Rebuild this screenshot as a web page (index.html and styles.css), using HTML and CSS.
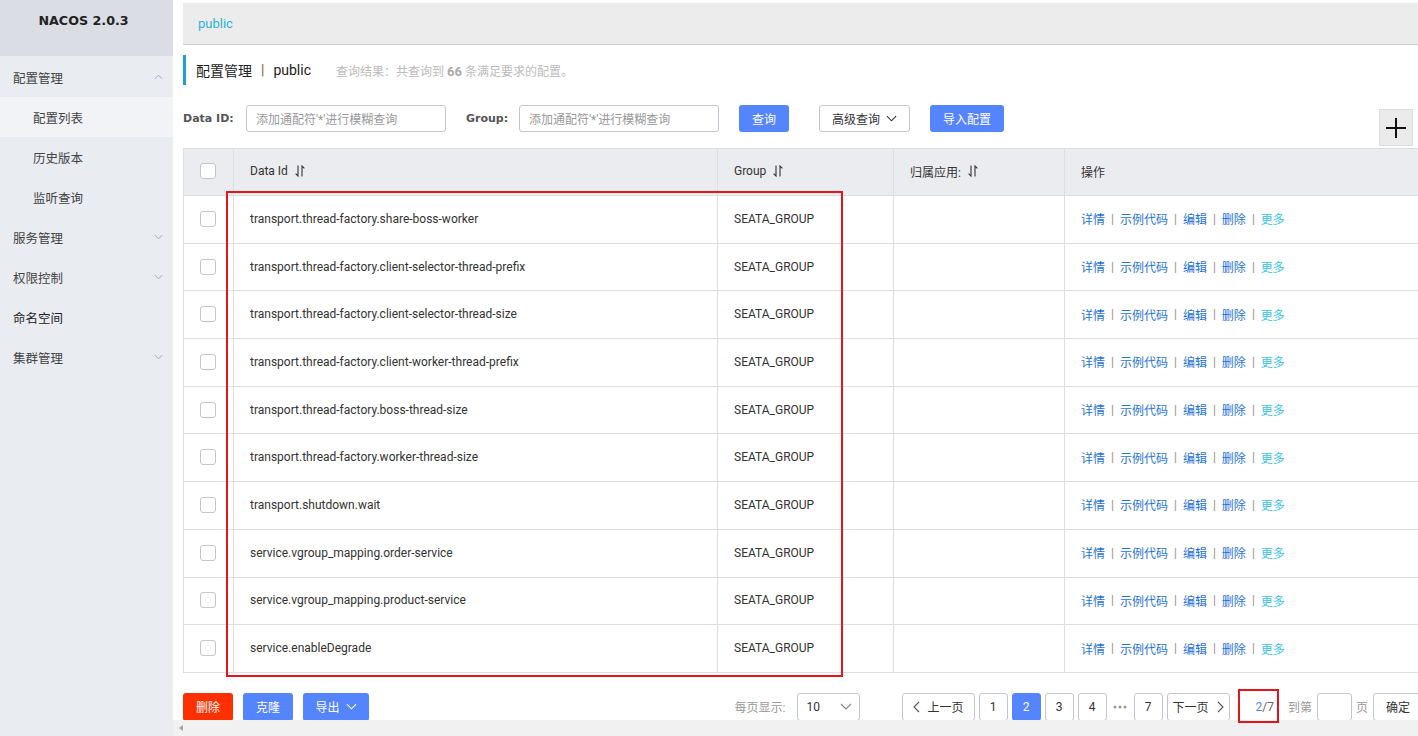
FILE: index.html
```html
<!DOCTYPE html>
<html lang="zh-CN">
<head>
<meta charset="utf-8">
<title>NACOS</title>
<link rel="stylesheet" href="styles.css">
</head>
<body>
<div class="app">
  <aside class="sidebar">
    <div class="brand">NACOS 2.0.3</div>
    <nav class="menu">
      <div class="menu-item">配置管理<svg class="arrow" viewBox="0 0 10 6"><polyline points="1,5 5,1 9,5"/></svg></div>
      <div class="menu-sub active">配置列表</div>
      <div class="menu-sub">历史版本</div>
      <div class="menu-sub">监听查询</div>
      <div class="menu-item">服务管理<svg class="arrow" viewBox="0 0 10 6"><polyline points="1,1 5,5 9,1"/></svg></div>
      <div class="menu-item">权限控制<svg class="arrow" viewBox="0 0 10 6"><polyline points="1,1 5,5 9,1"/></svg></div>
      <div class="menu-item dark">命名空间</div>
      <div class="menu-item">集群管理<svg class="arrow" viewBox="0 0 10 6"><polyline points="1,1 5,5 9,1"/></svg></div>
    </nav>
  </aside>
  <main class="main">
    <div class="content">
      <div class="crumb"><span class="crumb-link">public</span></div>
      <div class="title-row">
        <span class="title">配置管理</span><span class="title-sep">|</span><span class="title">public</span>
        <span class="result">查询结果：共查询到 <b>66</b> 条满足要求的配置。</span>
      </div>
      <div class="search-row">
        <label class="label">Data ID:</label>
        <div class="input"><span class="ph">添加通配符'*'进行模糊查询</span></div>
        <label class="label label-group">Group:</label>
        <div class="input"><span class="ph">添加通配符'*'进行模糊查询</span></div>
        <button class="btn btn-primary btn-query">查询</button>
        <button class="btn btn-normal btn-adv">高级查询<svg class="chev" viewBox="0 0 12 7"><polyline points="1,1 6,6 11,1"/></svg></button>
        <button class="btn btn-primary btn-import">导入配置</button>
        <button class="btn-plus"><svg viewBox="0 0 22 22"><line x1="1" y1="11" x2="21" y2="11"/><line x1="11" y1="1" x2="11" y2="21"/></svg></button>
      </div>
      <div class="table">
        <div class="tr thead">
          <div class="td c-check"><span class="checkbox"></span></div>
          <div class="td c-id">Data Id<svg class="sort" viewBox="0 0 10 12"><path d="M3 0.5V11L0.6 8.6M7 11.5V1L9.4 3.4"/></svg></div>
          <div class="td c-group">Group<svg class="sort" viewBox="0 0 10 12"><path d="M3 0.5V11L0.6 8.6M7 11.5V1L9.4 3.4"/></svg></div>
          <div class="td c-app">归属应用:<svg class="sort" viewBox="0 0 10 12"><path d="M3 0.5V11L0.6 8.6M7 11.5V1L9.4 3.4"/></svg></div>
          <div class="td c-op">操作</div>
        </div>
        <div class="tr"><div class="td c-check"><span class="checkbox"></span></div><div class="td c-id">transport.thread-factory.share-boss-worker</div><div class="td c-group">SEATA_GROUP</div><div class="td c-app"></div><div class="td c-op"><a>详情</a><i>|</i><a>示例代码</a><i>|</i><a>编辑</a><i>|</i><a>删除</a><i>|</i><a class="more">更多</a></div></div>
        <div class="tr"><div class="td c-check"><span class="checkbox"></span></div><div class="td c-id">transport.thread-factory.client-selector-thread-prefix</div><div class="td c-group">SEATA_GROUP</div><div class="td c-app"></div><div class="td c-op"><a>详情</a><i>|</i><a>示例代码</a><i>|</i><a>编辑</a><i>|</i><a>删除</a><i>|</i><a class="more">更多</a></div></div>
        <div class="tr"><div class="td c-check"><span class="checkbox"></span></div><div class="td c-id">transport.thread-factory.client-selector-thread-size</div><div class="td c-group">SEATA_GROUP</div><div class="td c-app"></div><div class="td c-op"><a>详情</a><i>|</i><a>示例代码</a><i>|</i><a>编辑</a><i>|</i><a>删除</a><i>|</i><a class="more">更多</a></div></div>
        <div class="tr"><div class="td c-check"><span class="checkbox"></span></div><div class="td c-id">transport.thread-factory.client-worker-thread-prefix</div><div class="td c-group">SEATA_GROUP</div><div class="td c-app"></div><div class="td c-op"><a>详情</a><i>|</i><a>示例代码</a><i>|</i><a>编辑</a><i>|</i><a>删除</a><i>|</i><a class="more">更多</a></div></div>
        <div class="tr"><div class="td c-check"><span class="checkbox"></span></div><div class="td c-id">transport.thread-factory.boss-thread-size</div><div class="td c-group">SEATA_GROUP</div><div class="td c-app"></div><div class="td c-op"><a>详情</a><i>|</i><a>示例代码</a><i>|</i><a>编辑</a><i>|</i><a>删除</a><i>|</i><a class="more">更多</a></div></div>
        <div class="tr"><div class="td c-check"><span class="checkbox"></span></div><div class="td c-id">transport.thread-factory.worker-thread-size</div><div class="td c-group">SEATA_GROUP</div><div class="td c-app"></div><div class="td c-op"><a>详情</a><i>|</i><a>示例代码</a><i>|</i><a>编辑</a><i>|</i><a>删除</a><i>|</i><a class="more">更多</a></div></div>
        <div class="tr"><div class="td c-check"><span class="checkbox"></span></div><div class="td c-id">transport.shutdown.wait</div><div class="td c-group">SEATA_GROUP</div><div class="td c-app"></div><div class="td c-op"><a>详情</a><i>|</i><a>示例代码</a><i>|</i><a>编辑</a><i>|</i><a>删除</a><i>|</i><a class="more">更多</a></div></div>
        <div class="tr"><div class="td c-check"><span class="checkbox"></span></div><div class="td c-id">service.vgroup_mapping.order-service</div><div class="td c-group">SEATA_GROUP</div><div class="td c-app"></div><div class="td c-op"><a>详情</a><i>|</i><a>示例代码</a><i>|</i><a>编辑</a><i>|</i><a>删除</a><i>|</i><a class="more">更多</a></div></div>
        <div class="tr"><div class="td c-check"><span class="checkbox"></span></div><div class="td c-id">service.vgroup_mapping.product-service</div><div class="td c-group">SEATA_GROUP</div><div class="td c-app"></div><div class="td c-op"><a>详情</a><i>|</i><a>示例代码</a><i>|</i><a>编辑</a><i>|</i><a>删除</a><i>|</i><a class="more">更多</a></div></div>
        <div class="tr"><div class="td c-check"><span class="checkbox"></span></div><div class="td c-id">service.enableDegrade</div><div class="td c-group">SEATA_GROUP</div><div class="td c-app"></div><div class="td c-op"><a>详情</a><i>|</i><a>示例代码</a><i>|</i><a>编辑</a><i>|</i><a>删除</a><i>|</i><a class="more">更多</a></div></div>
      </div>
      <div class="toolbar">
        <div class="actions">
          <button class="btn btn-danger">删除</button>
          <button class="btn btn-primary">克隆</button>
          <button class="btn btn-primary btn-export">导出<svg class="chev" viewBox="0 0 12 7"><polyline points="1,1 6,6 11,1"/></svg></button>
        </div>
        <div class="pager">
          <span class="pg-label">每页显示:</span>
          <div class="pg-select">10<svg class="chev" viewBox="0 0 12 7"><polyline points="1,1 6,6 11,1"/></svg></div>
          <div class="pg-btn pg-prev"><svg class="chev-l" viewBox="0 0 7 12"><polyline points="6,1 1,6 6,11"/></svg>上一页</div>
          <div class="pg-btn pg-num">1</div>
          <div class="pg-btn pg-num current">2</div>
          <div class="pg-btn pg-num">3</div>
          <div class="pg-btn pg-num">4</div>
          <svg class="pg-ellipsis" viewBox="0 0 14 4"><circle cx="2" cy="2" r="1.5"/><circle cx="7" cy="2" r="1.5"/><circle cx="12" cy="2" r="1.5"/></svg>
          <div class="pg-btn pg-num pg-last">7</div>
          <div class="pg-btn pg-next">下一页<svg class="chev-l" viewBox="0 0 7 12"><polyline points="1,1 6,6 1,11"/></svg></div>
          <span class="pg-display"><em>2</em>/7</span>
          <span class="pg-label pg-jump">到第</span>
          <div class="pg-input"></div>
          <span class="pg-label pg-page">页</span>
          <div class="pg-btn pg-go">确定</div>
        </div>
      </div>
    </div>
    <div class="hscroll"><span class="hs-arrow"></span></div>
  </main>
  <div class="mark mark-table"></div>
  <div class="mark mark-page"></div>
</div>
</body>
</html>
```

FILE: styles.css
```css
* { box-sizing: border-box; }
html, body { margin: 0; padding: 0; }
body {
  width: 1418px;
  height: 736px;
  overflow: hidden;
  background: #fff;
  font-family: Roboto, "Noto Sans CJK SC", sans-serif;
  color: #333;
  font-size: 12px;
}
.app {
  position: relative;
  display: flex;
  width: 1418px;
  height: 736px;
}

/* sidebar */
.sidebar {
  width: 173px;
  flex: none;
  background: #e9ecf1;
  height: 736px;
}
.brand {
  height: 56px;
  background: #dadde3;
  text-align: center;
  font-family: "DejaVu Sans", "Noto Sans", sans-serif;
  font-weight: bold;
  font-size: 12.7px;
  color: #222;
  padding-top: 13px;
  padding-right: 6px;
}
.menu { padding-top: 1px; }
.menu-item, .menu-sub {
  height: 40px;
  display: flex;
  align-items: center;
  font-family: "Noto Sans CJK SC", sans-serif;
  font-size: 12.5px;
  color: #444;
  position: relative;
}
.menu-item { padding-left: 13px; }
.menu-item.dark { color: #222; }
.menu-sub { padding-left: 33px; }
.menu-sub.active { background: #f2f3f7; }
.arrow {
  position: absolute;
  left: 154px;
  top: 17px;
  width: 9px;
  height: 6px;
  fill: none;
  stroke: #9aa0a8;
  stroke-width: 1;
}

/* main */
.main {
  flex: 1;
  display: flex;
  flex-direction: column;
  height: 736px;
  overflow: hidden;
  min-width: 0;
}
.content {
  flex: 1;
  padding: 3px 0 0 10px;
  overflow: hidden;
  min-height: 0;
}
.hscroll {
  height: 16px;
  flex: none;
  background: #f1f1f1;
  position: relative;
}
.hs-arrow {
  position: absolute;
  left: 6px;
  top: 5px;
  width: 0;
  height: 0;
  border-top: 3.5px solid transparent;
  border-bottom: 3.5px solid transparent;
  border-right: 4px solid #a3a3a3;
}

.crumb {
  height: 42px;
  background: #ececec;
  border-bottom: 1px solid #cfcfcf;
  padding-left: 15px;
  display: flex;
  align-items: center;
  width: 1235px;
}
.crumb-link { color: #2bb2d6; font-size: 13px; }

.title-row {
  margin-top: 10px;
  height: 30px;
  border-left: 3px solid #1e9fd6;
  display: flex;
  align-items: center;
  padding-left: 10px;
}
.title { font-size: 14px; color: #222; }
.title-sep { font-size: 14px; color: #8a5a2a; margin: 0 9px; }
.result { margin-left: 25px; color: #bbb; font-size: 12px; }
.result b { color: #aaa; font-size: 13px; }

.search-row {
  margin-top: 20px;
  display: flex;
  align-items: flex-start;
  width: 1230px;
}
.label {
  font-family: "DejaVu Sans", sans-serif;
  font-weight: bold;
  font-size: 11px;
  color: #555;
  line-height: 27px;
  height: 27px;
  width: 63px;
}
.label-group { width: 53px; margin-left: 20px; }
.input {
  width: 200px;
  height: 27px;
  border: 1px solid #c4c6cf;
  border-radius: 3px;
  display: flex;
  align-items: center;
  padding-left: 9px;
}
.ph { color: #999; font-size: 12px; }
.btn {
  height: 27px;
  border: none;
  border-radius: 3px;
  font-family: Roboto, "Noto Sans CJK SC", sans-serif;
  font-size: 12px;
  padding: 0;
  display: inline-flex;
  align-items: center;
  justify-content: center;
  gap: 6px;
}
.btn-primary { background: #5584ff; color: #fff; }
.btn-danger { background: #ff3000; color: #fff; }
.btn-normal { background: #fff; color: #333; border: 1px solid #c4c6cf; }
.btn-query { width: 50px; margin-left: 20px; }
.btn-adv { width: 91px; margin-left: 30px; }
.btn-import { width: 74px; margin-left: 20px; }
.chev {
  width: 11px;
  height: 7px;
  fill: none;
  stroke: currentColor;
  stroke-width: 1.2;
}
.btn-plus {
  margin-left: auto;
  margin-top: 4px;
  width: 34px;
  height: 37px;
  background: #ebebeb;
  border: 1px solid #dcdcdc;
  padding: 0;
  display: flex;
  align-items: center;
  justify-content: center;
}
.btn-plus svg { width: 22px; height: 22px; stroke: #111; stroke-width: 2; }

/* table */
.table {
  margin-top: 2px;
  width: 1240px;
  border-top: 1px solid #dcdee3;
  border-left: 1px solid #dcdee3;
}
.tr {
  display: grid;
  grid-template-columns: 50px 484px 176px 171px 1fr;
  height: 47.7px;
  border-bottom: 1px solid #dcdee3;
}
.tr.thead { height: 47px; background: #ebecf0; }
.td {
  border-right: 1px solid #dcdee3;
  display: flex;
  align-items: center;
  padding-left: 16px;
  padding-bottom: 1px;
  font-size: 12px;
  color: #333;
  white-space: nowrap;
}
.thead .td { padding-bottom: 2px; }
.td.c-op { border-right: none; }
.checkbox {
  width: 16px;
  height: 16px;
  border: 1px solid #c4c6cf;
  border-radius: 3px;
  background: #fff;
  display: block;
}
.sort {
  width: 10px;
  height: 12px;
  margin-left: 7px;
  fill: none;
  stroke: #333;
  stroke-width: 1.1;
}
.c-op a { color: #1f72d9; text-decoration: none; }
.c-op a.more { color: #3cc3e6; }
.c-op i { font-style: normal; color: #9a8f86; margin: 0 6px; }

/* toolbar */
.toolbar {
  width: 1240px;
  margin-top: 20px;
  display: flex;
  justify-content: space-between;
  align-items: center;
  height: 28px;
}
.actions { display: flex; gap: 10px; }
.actions .btn { width: 50px; height: 28px; }
.actions .btn-export { width: 66px; }
.pager { display: flex; align-items: center; }
.pg-label { color: #999; font-size: 12px; margin-right: 11px; }
.pg-select {
  width: 63px;
  height: 28px;
  border: 1px solid #c4c6cf;
  border-radius: 3px;
  display: flex;
  align-items: center;
  padding-left: 9px;
  font-size: 12px;
  color: #333;
  margin-right: 42px;
}
.pg-select .chev { margin-left: auto; margin-right: 7px; color: #888; width: 12px; }
.pg-btn {
  height: 28px;
  border: 1px solid #c4c6cf;
  border-radius: 3px;
  display: flex;
  align-items: center;
  justify-content: center;
  font-size: 12px;
  color: #333;
  background: #fff;
}
.pg-num { width: 29px; margin-left: 4px; }
.pg-num.current { background: #5584ff; border-color: #5584ff; color: #fff; }
.pg-prev { width: 73px; gap: 8px; }
.pg-next { width: 63px; gap: 8px; margin-left: 4px; }
.chev-l { width: 7px; height: 12px; fill: none; stroke: #555; stroke-width: 1.1; }
.pg-ellipsis { width: 14px; height: 4px; fill: #999; margin-left: 6px; }
.pg-num.pg-last { margin-left: 7px; }
.pg-display { margin-left: 26px; font-size: 12px; color: #666; }
.pg-display em { font-style: normal; color: #5584ff; }
.pg-jump { margin-left: 14px; margin-right: 5px; }
.pg-input {
  width: 35px;
  height: 28px;
  border: 1px solid #c4c6cf;
  border-radius: 3px;
}
.pg-page { margin-left: 4px; margin-right: 5px; }
.pg-go { width: 50px; }

/* annotation marks */
.mark {
  position: absolute;
  border: 2px solid #e8141c;
  pointer-events: none;
}
.mark-table { left: 226px; top: 191px; width: 617px; height: 486px; }
.mark-page { left: 1238px; top: 689px; width: 41px; height: 34px; }
```
